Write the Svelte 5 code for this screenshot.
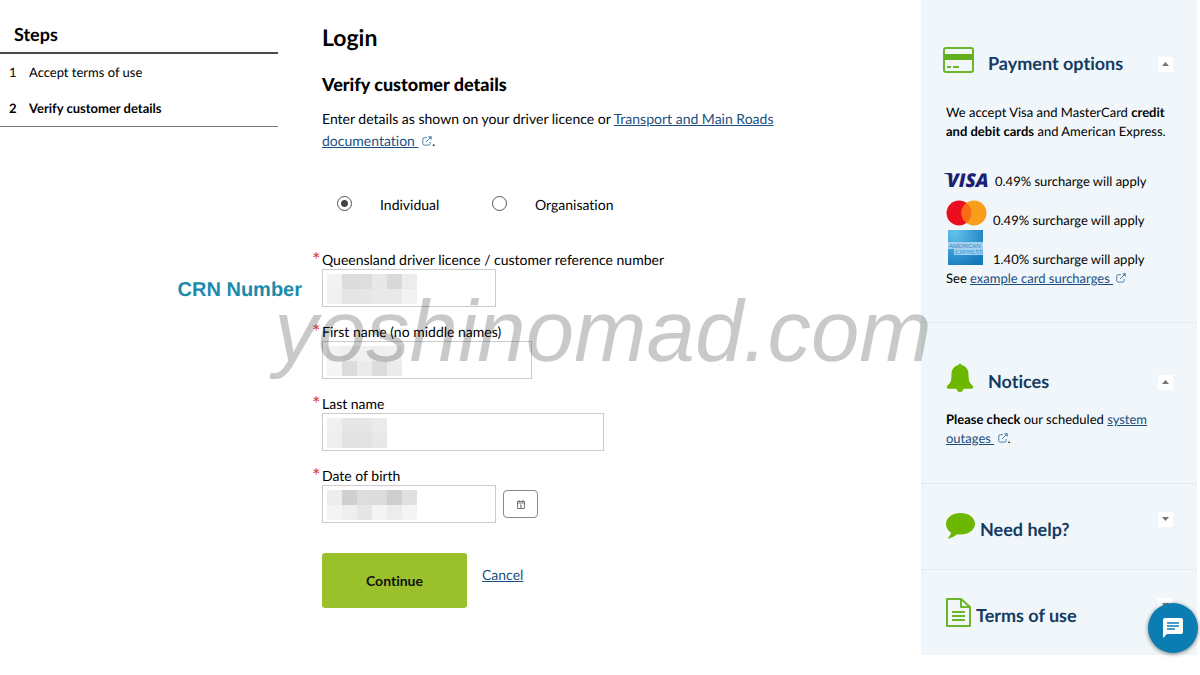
<script lang="ts">
	const steps = ['Accept terms of use', 'Verify customer details'];
	const currentStep = 1;

	const fields = [
		{
			id: 'crn',
			label: 'Queensland driver licence / customer reference number',
			size: 'small',
			note: 'CRN Number',
			mask: [
				['#f2f2f2', '#dcdcdc', '#dddddd', '#e8e8e8', '#d9d9d9', '#ececec'],
				['#f0f0f0', '#e5e5e5', '#e6e6e6', '#e9e9e9', '#e9e9e9', '#f2f2f2']
			]
		},
		{
			id: 'first',
			label: 'First name (no middle names)',
			size: 'medium',
			mask: [
				['#f2f2f2', '#efefef', '#f0f0f0', '#efefef', '#f1f1f1'],
				['#f5f5f5', '#dcdcdc', '#ebebeb', '#dcdcdc', '#ebebeb']
			]
		},
		{
			id: 'last',
			label: 'Last name',
			size: 'large',
			mask: [
				['#f0f0f0', '#e6e6e6', '#e6e6e6', '#ebebeb'],
				['#eeeeee', '#e2e2e2', '#e3e3e3', '#e8e8e8']
			]
		},
		{
			id: 'dob',
			label: 'Date of birth',
			size: 'small',
			calendar: true,
			mask: [
				['#ededed', '#cfcfcf', '#dddddd', '#dcdcdc', '#cecece', '#e0e0e0'],
				['#f4f4f4', '#eeeeee', '#e6e6e6', '#f4f4f4', '#ececec', '#f4f4f4']
			]
		}
	];

	let customerType = $state('individual');
	let open = $state({ payment: true, notices: true, help: false, terms: false });
</script>

{#snippet external()}
	<svg class="external" viewBox="0 0 10 10" aria-hidden="true">
		<path d="M5 1.7H2.2Q.8 1.7.8 3.1v4.6q0 1.4 1.4 1.4h4.6q1.4 0 1.4-1.4V6M4 6l4.6-4.6" />
		<path class="tip" d="M6 .3h3.7V4z" />
	</svg>
{/snippet}

{#snippet toggle(key: 'payment' | 'notices' | 'help' | 'terms', name: string)}
	<button
		class="toggle"
		type="button"
		aria-label={name}
		aria-expanded={open[key]}
		onclick={() => (open[key] = !open[key])}
	>
		<svg viewBox="0 0 7 4" aria-hidden="true">
			<path d={open[key] ? 'M0 4 3.5 0 7 4z' : 'M0 0h7L3.5 4z'} />
		</svg>
	</button>
{/snippet}

<div class="page">
	<nav aria-labelledby="steps">
		<h2 id="steps">Steps</h2>
		<ol>
			{#each steps as step, i}
				<li class:current={i === currentStep}><span>{i + 1}</span>{step}</li>
			{/each}
		</ol>
	</nav>

	<main>
		<h1>Login</h1>
		<h2>Verify customer details</h2>
		<p>
			Enter details as shown on your driver licence or
			<a href="#documentation">Transport and Main Roads documentation&nbsp;</a>
			{@render external()}.
		</p>

		<form onsubmit={(e) => e.preventDefault()}>
			<div class="types">
				<label><input type="radio" name="type" value="individual" bind:group={customerType} />Individual</label>
				<label><input type="radio" name="type" value="organisation" bind:group={customerType} />Organisation</label>
			</div>

			{#each fields as field}
				<div class="field">
					<label for={field.id}><span class="required">*</span>{field.label}</label>
					<div class="control">
						<div class="box {field.size}">
							<input id={field.id} type="text" required />
							<div class="mask">
								{#each field.mask as row}
									<div class="mask-row">
										{#each row as colour}
											<i style="background: {colour}"></i>
										{/each}
									</div>
								{/each}
							</div>
							{#if field.note}
								<strong class="note">{field.note}</strong>
							{/if}
						</div>
						{#if field.calendar}
							<button class="calendar" type="button" aria-label="Choose date">
								<svg viewBox="0 0 8 9" aria-hidden="true">
									<path d="M.5 1.5h7v7h-7zM.5 3h7M2 0v2M6 0v2M3.3 5 4 4.6v2.8M3.2 7.2h1.6" />
								</svg>
							</button>
						{/if}
					</div>
				</div>
			{/each}

			<div class="actions">
				<button class="continue" type="submit">Continue</button>
				<a href="#cancel">Cancel</a>
			</div>
		</form>
	</main>

	<aside>
		<section class="payment">
			<header class="wide">
				<svg class="card" viewBox="0 0 31 26" aria-hidden="true">
					<rect x="1" y="1" width="29" height="24" rx="2" fill="none" stroke="#6cb52d" stroke-width="2" />
					<path d="M1 7h29v6H1z" fill="#62b01e" />
					<path d="M4 20h4M10 20h6" stroke="#6cb52d" stroke-width="2" />
				</svg>
				<h2>Payment options</h2>
				{@render toggle('payment', 'Payment options')}
			</header>
			{#if open.payment}
				<p>We accept Visa and MasterCard <b>credit and debit cards</b> and American Express.</p>
				<ul>
					<li class="visa">
						<svg viewBox="0 0 45 20" role="img" aria-label="Visa">
							<path d="M0 2h7l2 4Q5 3 0 2.500z" fill="#1a2a6c" />
							<text x="3" y="16" font-family="Open Sans, sans-serif" font-size="19" font-weight="800" font-style="italic" fill="#1a2072">VISA</text>
						</svg>
						0.49% surcharge will apply
					</li>
					<li>
						<svg viewBox="0 0 41 26" role="img" aria-label="MasterCard">
							<circle cx="13" cy="13" r="12.500" fill="#eb0d20" />
							<circle cx="28" cy="13" r="12.500" fill="#f79e1b" />
							<path d="M20.500 3a12.500 12.500 0 0 1 0 20 12.500 12.500 0 0 1 0-20" fill="#fb6b14" />
						</svg>
						0.49% surcharge will apply
					</li>
					<li class="amex">
						<svg viewBox="0 0 35 35" role="img" aria-label="American Express">
							<defs>
								<radialGradient id="amex" cx=".2" cy=".1" r="1">
									<stop offset="0" stop-color="#63c2ec" />
									<stop offset="1" stop-color="#1579bd" />
								</radialGradient>
							</defs>
							<path d="M0 0h35v35H0z" fill="url(#amex)" />
							<path d="M0 12h35v13H6v-6H0z" fill="#a3d0ee" />
							<g font-family="Liberation Sans, sans-serif" font-size="6" fill="#2f8ac6">
								<text x="1" y="18">AMERICAN</text>
								<text x="7" y="24">EXPRESS</text>
							</g>
						</svg>
						1.40% surcharge will apply
					</li>
				</ul>
				<p class="see">See <a href="#surcharges">example card surcharges&nbsp;</a> {@render external()}</p>
			{/if}
		</section>

		<section class="notices">
			<header class="wide">
				<svg class="bell" viewBox="0 0 28 30" aria-hidden="true">
					<path d="M12.500 2a1.500 1.500 0 0 1 3 0c4 .8 7 4 7 9 0 7 1 9 4 11.500q1.500 1.300.5 2.500-.4.700-1.500.7H17.500q-.7 3.300-3.500 3.300t-3.500-3.300H2.500Q1.400 25.700 1 25q-1-1.200.5-2.500c3-2.500 4-4.500 4-11.500 0-5 3-8.200 7-9" fill="#6cb700" />
				</svg>
				<h2>Notices</h2>
				{@render toggle('notices', 'Notices')}
			</header>
			{#if open.notices}
				<p><b>Please check</b> our scheduled <a href="#outages">system outages&nbsp;</a> {@render external()}.</p>
			{/if}
		</section>

		<section class="closed">
			<header>
				<svg class="bubble" viewBox="0 0 29 26" aria-hidden="true">
					<path d="M14.500 0C22.500 0 29 4.700 29 10.800s-6.500 10.700-14.500 10.700c-1.200 0-2.400-.1-3.500-.3-2.600 2.300-5.300 3.500-8.300 4.200-.5.100-.9-.6-.5-1 1.500-1.400 2.600-2.700 2.800-4.700C1.900 17.700 0 14.500 0 10.800 0 4.700 6.500 0 14.500 0" fill="#6cb700" />
				</svg>
				<h2>Need help?</h2>
				{@render toggle('help', 'Need help?')}
			</header>
		</section>

		<section class="closed">
			<header>
				<svg class="document" viewBox="0 0 25 29" aria-hidden="true">
					<path d="M1 1h14l9 8v19H1zM15 1v8h9M6 14h13M6 18h13M6 22h13" fill="none" stroke="#6cb52d" stroke-width="2" stroke-linejoin="round" />
				</svg>
				<h2>Terms of use</h2>
				{@render toggle('terms', 'Terms of use')}
			</header>
		</section>
	</aside>

	<div class="watermark">yoshinomad.com</div>

	<button class="chat" type="button" aria-label="Chat">
		<svg viewBox="0 0 20 20" aria-hidden="true">
			<path d="M2 0h16a2 2 0 0 1 2 2v12a2 2 0 0 1-2 2H4l-4 4V2a2 2 0 0 1 2-2" fill="#fff" />
			<path d="M4 5h12M4 8h12M4 11h8" stroke="#0b7db2" stroke-width="1.500" />
		</svg>
	</button>
</div>

<style>
	:global(body) {
		background: #fff;
	}
	.page {
		position: relative;
		display: flex;
		align-items: flex-start;
		padding-right: 3px;
		font-family: Lato, 'Liberation Sans', sans-serif;
		font-size: 14px;
		font-variant-ligatures: none;
		line-height: 22px;
		text-rendering: geometricPrecision;
		color: #000;
	}
	h1,
	h2,
	p,
	ol,
	ul {
		margin: 0;
		padding: 0;
		list-style: none;
	}
	a {
		color: #1b4f7f;
	}
	button {
		padding: 0;
		font: inherit;
		cursor: pointer;
	}
	svg {
		display: block;
		flex: none;
	}
	.external {
		display: inline-block;
		width: 10px;
		height: 10px;
		fill: none;
		stroke: #4c83ac;
	}
	.external .tip {
		fill: #4c83ac;
		stroke: none;
	}

	/* steps */
	nav {
		width: 278px;
		flex: none;
		padding-top: 22px;
		font-size: 13px;
	}
	nav h2 {
		padding: 0 14px 6px;
		border-bottom: 2px solid #454b4b;
		font-size: 18px;
		line-height: 24px;
	}
	ol {
		border-bottom: 1px solid #777;
	}
	li {
		display: flex;
	}
	ol li {
		padding: 7px 9px;
	}
	ol span {
		width: 20px;
	}
	.current {
		font-weight: bold;
	}

	/* form */
	main {
		flex: 1;
		padding: 22px 44px 0 34px;
	}
	h1,
	main h2,
	main p {
		margin-left: 10px;
	}
	h1 {
		font-size: 23px;
		line-height: 30px;
	}
	main h2 {
		margin-top: 20px;
		font-size: 18px;
		font-weight: 900;
		line-height: 24px;
	}
	main p {
		max-width: 480px;
		margin-top: 12px;
	}
	.types {
		display: flex;
		padding: 42px 0 33px 25px;
	}
	.types label {
		display: flex;
		align-items: center;
		gap: 28px;
		width: 155px;
	}
	.types input {
		width: 15px;
		height: 15px;
		margin: 0 0 4px;
		appearance: none;
		border: 1px solid #555;
		border-radius: 50%;
		background: #fff;
	}
	.types input:checked {
		background: radial-gradient(#444 3px, #fff 4px);
	}
	.field {
		margin-bottom: 14px;
	}
	.field label {
		display: flex;
		padding-top: 2px;
		line-height: 18px;
	}
	.required {
		width: 10px;
		color: #e2362c;
		font-size: 20px;
	}
	.control {
		display: flex;
		align-items: center;
		gap: 7px;
		padding-left: 10px;
	}
	.box {
		position: relative;
	}
	.small {
		width: 174px;
	}
	.medium {
		width: 210px;
	}
	.large {
		width: 282px;
	}
	.box input {
		display: block;
		box-sizing: border-box;
		width: 100%;
		height: 38px;
		padding: 0 8px;
		border: 1px solid #ccc;
		font: inherit;
	}
	.mask {
		position: absolute;
		top: 5px;
		left: 5px;
		pointer-events: none;
	}
	.mask-row {
		display: flex;
	}
	.mask i {
		width: 15px;
		height: 15px;
	}
	.note {
		position: absolute;
		top: 10px;
		right: 100%;
		margin-right: 20px;
		color: #1c8bab;
		font-family: 'Liberation Sans', Arial, sans-serif;
		font-size: 20px;
		white-space: nowrap;
	}
	.calendar {
		display: flex;
		align-items: center;
		justify-content: center;
		width: 35px;
		height: 28px;
		border: 1px solid #888;
		border-radius: 4px;
		background: #fff;
	}
	.calendar svg {
		width: 8px;
		height: 9px;
		fill: none;
		stroke: #777;
	}
	.actions {
		display: flex;
		gap: 15px;
		padding: 16px 0 0 10px;
	}
	.actions a {
		padding-top: 11px;
	}
	.continue {
		width: 145px;
		height: 55px;
		border: 0;
		border-radius: 3px;
		background: #9ac02b;
		color: #111;
		font-weight: bold;
	}

	/* side panels */
	aside {
		width: 276px;
		flex: none;
		background: #f0f6f9;
		font-size: 13px;
		line-height: 19px;
	}
	section {
		box-sizing: border-box;
		padding: 0 24px 0 25px;
		border-bottom: 1px solid #e2ebf1;
	}
	section:last-child {
		border: 0;
	}
	aside header {
		display: flex;
		align-items: center;
		gap: 5px;
	}
	aside h2 {
		flex: 1;
		color: #123a63;
		font-size: 18px;
		line-height: 24px;
	}
	.payment {
		padding-top: 45px;
		padding-bottom: 34px;
	}
	.payment header {
		margin-left: -3px;
	}
	.payment h2 {
		padding-top: 6px;
	}
	.wide {
		gap: 14px;
	}
	.card {
		width: 31px;
		height: 26px;
	}
	.payment p {
		margin-top: 28px;
	}
	.payment ul {
		padding-top: 31px;
	}
	.payment li {
		align-items: flex-end;
		gap: 6px;
		height: 39px;
	}
	.payment .visa {
		height: 19px;
		margin-left: -2px;
	}
	.visa svg {
		width: 45px;
		height: 20px;
		overflow: visible;
	}
	.payment li:nth-child(2) svg {
		width: 41px;
		height: 26px;
		margin-bottom: 4px;
	}
	.amex svg {
		width: 35px;
		height: 35px;
		margin: 0 4px 4px 2px;
	}
	.payment .see {
		margin-top: 0;
	}
	.notices {
		padding-top: 40px;
		padding-bottom: 35px;
	}
	.bell {
		width: 28px;
		height: 30px;
	}
	.notices h2 {
		padding-top: 6px;
	}
	.notices p {
		margin-top: 17px;
	}
	.closed {
		height: 86px;
		padding-top: 27px;
	}
	.closed:last-child {
		height: 85px;
	}
	.closed h2 {
		padding-top: 6px;
	}
	.bubble {
		width: 29px;
		height: 26px;
	}
	.document {
		width: 25px;
		height: 29px;
	}
	.toggle {
		display: flex;
		align-items: center;
		justify-content: center;
		width: 15px;
		height: 15px;
		border: 0;
		background: #fff;
	}
	.closed .toggle {
		margin-bottom: 14px;
	}
	.wide .toggle {
		margin-top: 8px;
	}
	.toggle svg {
		width: 7px;
		height: 4px;
		fill: #777;
	}

	.watermark {
		position: absolute;
		top: 282px;
		left: 6px;
		right: 0;
		color: rgba(0, 0, 0, 0.21);
		font-family: 'Liberation Sans', Arial, sans-serif;
		font-size: 87px;
		font-style: italic;
		line-height: 100px;
		text-align: center;
		pointer-events: none;
	}
	.chat {
		position: fixed;
		right: 2px;
		bottom: 22px;
		display: flex;
		align-items: center;
		justify-content: center;
		width: 50px;
		height: 50px;
		border: 0;
		border-radius: 50%;
		background: #0b7db2;
		box-shadow: 0 1px 4px rgba(0, 0, 0, 0.5);
	}
	.chat svg {
		width: 20px;
		height: 20px;
	}
</style>
